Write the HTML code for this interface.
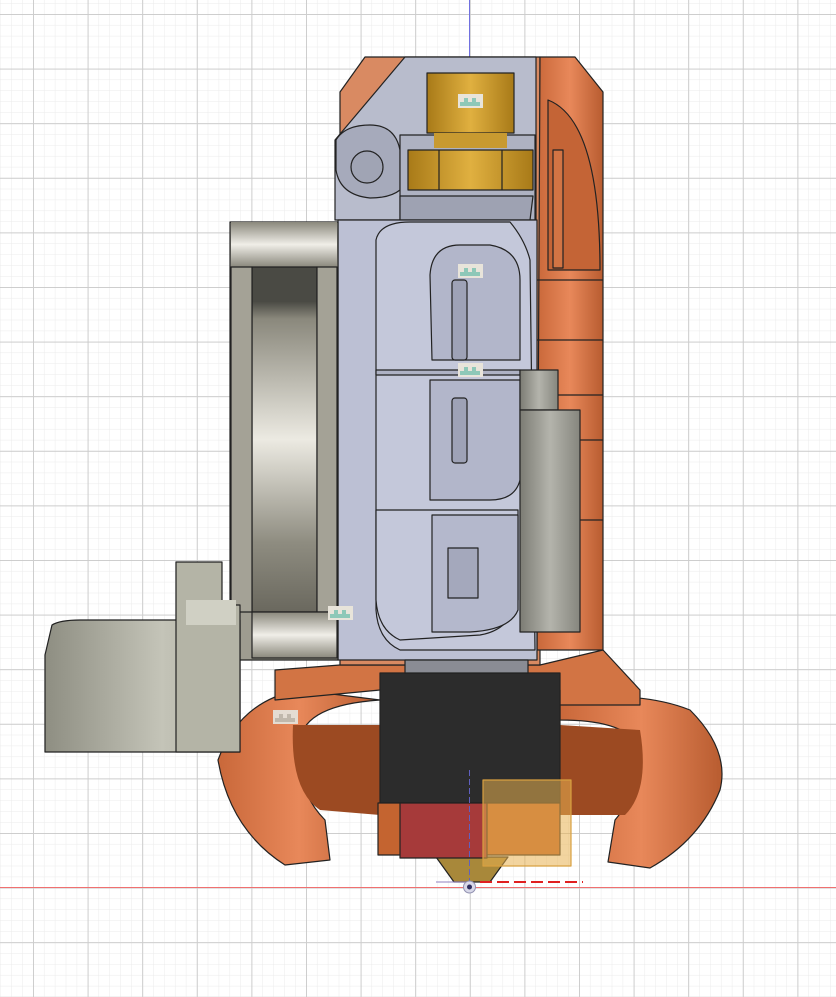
<!DOCTYPE html>
<html><head><meta charset="utf-8"><style>
html,body{margin:0;padding:0;background:#fff;}
svg{display:block;}
</style></head><body>
<svg width="836" height="997" viewBox="0 0 836 997" xmlns="http://www.w3.org/2000/svg">
<defs>
<pattern id="minor" x="33" y="14" width="10.92" height="10.92" patternUnits="userSpaceOnUse">
<path d="M0 0V10.92M0 0H10.92" stroke="#ebebeb" stroke-width="1" fill="none"/>
</pattern>
<pattern id="major" x="33" y="14" width="54.6" height="54.6" patternUnits="userSpaceOnUse">
<path d="M0.5 0V54.6M0 0.5H54.6" stroke="#cdcdcd" stroke-width="1" fill="none"/>
</pattern>
<linearGradient id="fan" x1="0" x2="0" y1="0" y2="1">
<stop offset="0" stop-color="#4a4a44"/><stop offset="0.1" stop-color="#4a4a44"/><stop offset="0.15" stop-color="#8a887c"/><stop offset="0.5" stop-color="#eceae2"/><stop offset="0.8" stop-color="#8e8c80"/><stop offset="1" stop-color="#6a685e"/>
</linearGradient>
<linearGradient id="fantop" x1="0" x2="0" y1="0" y2="1">
<stop offset="0" stop-color="#8a887c"/><stop offset="0.5" stop-color="#f0eee8"/><stop offset="1" stop-color="#8a887c"/>
</linearGradient>
<linearGradient id="brass" x1="0" x2="1">
<stop offset="0" stop-color="#a87a18"/><stop offset="0.5" stop-color="#e0b040"/><stop offset="1" stop-color="#a87a18"/>
</linearGradient>
<linearGradient id="orng" x1="0" x2="1">
<stop offset="0" stop-color="#c9683a"/><stop offset="0.5" stop-color="#e8885a"/><stop offset="1" stop-color="#b85c30"/>
</linearGradient>
<linearGradient id="cyl" x1="0" x2="1">
<stop offset="0" stop-color="#7c7c74"/><stop offset="0.5" stop-color="#b4b4ac"/><stop offset="1" stop-color="#86867e"/>
</linearGradient>
<linearGradient id="conn" x1="0" x2="1">
<stop offset="0" stop-color="#8e8e82"/><stop offset="0.6" stop-color="#c4c4b8"/><stop offset="1" stop-color="#a8a89c"/>
</linearGradient>
</defs>
<rect width="836" height="997" fill="#fff"/>
<rect width="836" height="997" fill="url(#minor)"/>
<rect width="836" height="997" fill="url(#major)"/>
<line x1="469.5" y1="0" x2="469.5" y2="60" stroke="#7070e0" stroke-width="1"/>
<line x1="0" y1="887.5" x2="836" y2="887.5" stroke="#f07070" stroke-width="1"/>

<g stroke="#222" stroke-width="1.2" stroke-linejoin="round">
<path d="M300 690 Q240 700 218 760 Q230 830 285 865 L330 860 L325 820 Q295 790 300 740 Q305 705 380 700 Z" fill="url(#orng)"/>
<path d="M560 700 Q640 690 690 710 Q730 750 720 790 Q700 840 650 868 L608 862 L615 820 Q640 790 640 750 Q630 720 560 720 Z" fill="url(#orng)"/>
<path d="M293 725 Q290 790 320 810 L380 815 L380 725 Z" fill="#9c4a22" stroke="none"/>
<path d="M560 725 L640 730 Q650 790 625 815 L560 815 Z" fill="#9c4a22" stroke="none"/>
<path d="M275 670 L340 665 L540 665 L603 650 L640 690 L640 705 L560 705 L560 690 L380 690 L275 700 Z" fill="#d27444"/>
<path d="M365 57 L540 57 L540 665 L340 665 L340 92 Z" fill="#d98a62"/>
<path d="M540 57 L575 57 L603 92 L603 650 L537 650 Z" fill="url(#orng)"/>
<path d="M548 100 Q600 120 600 270 L548 270 Z" fill="#c46436"/>
<rect x="553" y="150" width="10" height="118" fill="#d27444"/>
<line x1="537" y1="280" x2="603" y2="280" /><line x1="537" y1="340" x2="603" y2="340"/><line x1="537" y1="395" x2="603" y2="395"/>
<line x1="537" y1="440" x2="603" y2="440"/><line x1="537" y1="520" x2="603" y2="520"/>
<path d="M405 57 L536 57 L536 220 L335 220 L335 140 L405 57 Z" fill="#b8bccc"/>
<path d="M336 140 Q345 125 370 125 Q395 125 400 150 L400 190 Q390 198 370 198 Q340 195 336 170 Z" fill="#a6aabb"/>
<circle cx="367" cy="167" r="16" fill="#a0a4b4"/>
<rect x="400" y="135" width="135" height="85" fill="#aeb2c2"/>
<path d="M400 196 L533 196 L530 220 L400 220 Z" fill="#9ea2b2"/>
<rect x="427" y="73" width="87" height="60" fill="url(#brass)"/>
<rect x="434" y="133" width="73" height="15" fill="#c89a30" stroke="none"/>
<path d="M408 150 L533 150 L533 190 L408 190 Z" fill="url(#brass)"/>
<line x1="439" y1="150" x2="439" y2="190"/><line x1="502" y1="150" x2="502" y2="190"/>
<rect x="338" y="220" width="199" height="440" fill="#bcc0d4"/>
<path d="M376 240 Q380 222 410 222 L510 222 Q525 240 530 260 L535 650 L400 650 Q378 640 376 610 Z" fill="#c4c8da"/>
<path d="M430 275 Q432 245 460 245 L490 245 Q520 250 520 280 L520 360 L432 360 Z" fill="#b2b6ca"/>
<rect x="452" y="280" width="15" height="80" rx="3" fill="#9ea2b6"/>
<path d="M376 370 L520 370 L520 375 L376 375 Z" fill="#aeb2c4"/>
<path d="M430 380 L520 380 L520 480 Q515 500 490 500 L430 500 Z" fill="#b2b6ca"/>
<rect x="452" y="398" width="15" height="65" rx="3" fill="#9ea2b6"/>
<path d="M376 510 L518 510 L518 600 Q510 630 480 635 L400 640 Q378 630 376 600 Z" fill="#c4c8da"/>
<path d="M432 515 L518 515 L518 610 Q510 630 470 632 L432 632 Z" fill="#b4b8cc"/>
<rect x="448" y="548" width="30" height="50" fill="#a4a8bc"/>
<rect x="520" y="370" width="38" height="40" fill="url(#cyl)"/>
<rect x="520" y="410" width="60" height="222" fill="url(#cyl)"/>
<rect x="230" y="222" width="108" height="438" fill="#9e9c90"/>
<rect x="231" y="222" width="106" height="45" fill="url(#fantop)" stroke="none"/>
<rect x="252" y="267" width="65" height="345" fill="url(#fan)"/>
<rect x="231" y="267" width="21" height="345" fill="#a4a296"/>
<rect x="317" y="267" width="20" height="345" fill="#a4a296"/>
<rect x="252" y="612" width="85" height="46" fill="url(#fantop)"/>
<path d="M52 625 Q60 620 80 620 L240 620 L240 752 L45 752 L45 655 Z" fill="url(#conn)"/>
<path d="M176 562 L222 562 L222 605 L240 605 L240 752 L176 752 Z" fill="#b4b4a6"/>
<rect x="186" y="600" width="50" height="25" fill="#d0d0c4" stroke="none"/>
<rect x="380" y="673" width="180" height="130" fill="#2c2c2c"/>
<path d="M405 660 L528 660 L528 673 L405 673 Z" fill="#8a8c94"/>
<path d="M378 803 L560 803 L560 855 L378 855 Z" fill="#c46430"/>
<path d="M436 857 L508 857 L490 882 L454 882 Z" fill="#a8883a"/>
<rect x="400" y="803" width="87" height="55" fill="#a63a3a"/>
<rect x="483" y="780" width="88" height="86" fill="#e8b050" fill-opacity="0.55" stroke="#d8a040"/>
</g>
<line x1="469.5" y1="770" x2="469.5" y2="890" stroke="#6060c0" stroke-width="1" stroke-dasharray="6,3"/>
<line x1="480" y1="882" x2="583" y2="882" stroke="#e02020" stroke-width="2" stroke-dasharray="12,5"/>
<line x1="436" y1="882" x2="470" y2="882" stroke="#9080c0" stroke-width="1"/>
<circle cx="469.5" cy="887" r="6" fill="#d8d8e8" stroke="#9090b0"/>
<circle cx="469.5" cy="887" r="2.5" fill="#303060"/>
<g>
<rect x="458" y="94" width="25" height="14" fill="#e8e4da"/><path d="M460 102h4v-4h4v4h4v-4h4v4h4v4h-20z" fill="#8ec8b8"/>
<rect x="458" y="264" width="25" height="14" fill="#e8e4da"/><path d="M460 272h4v-4h4v4h4v-4h4v4h4v4h-20z" fill="#8ec8b8"/>
<rect x="458" y="363" width="25" height="14" fill="#e8e4da"/><path d="M460 371h4v-4h4v4h4v-4h4v4h4v4h-20z" fill="#8ec8b8"/>
<rect x="328" y="606" width="25" height="14" fill="#e8e4da"/><path d="M330 614h4v-4h4v4h4v-4h4v4h4v4h-20z" fill="#8ec8b8"/>
<rect x="273" y="710" width="25" height="14" fill="#e4dcd2"/><path d="M275 718h4v-4h4v4h4v-4h4v4h4v4h-20z" fill="#c0b8ac"/>
</g>
</svg>
</body></html>
